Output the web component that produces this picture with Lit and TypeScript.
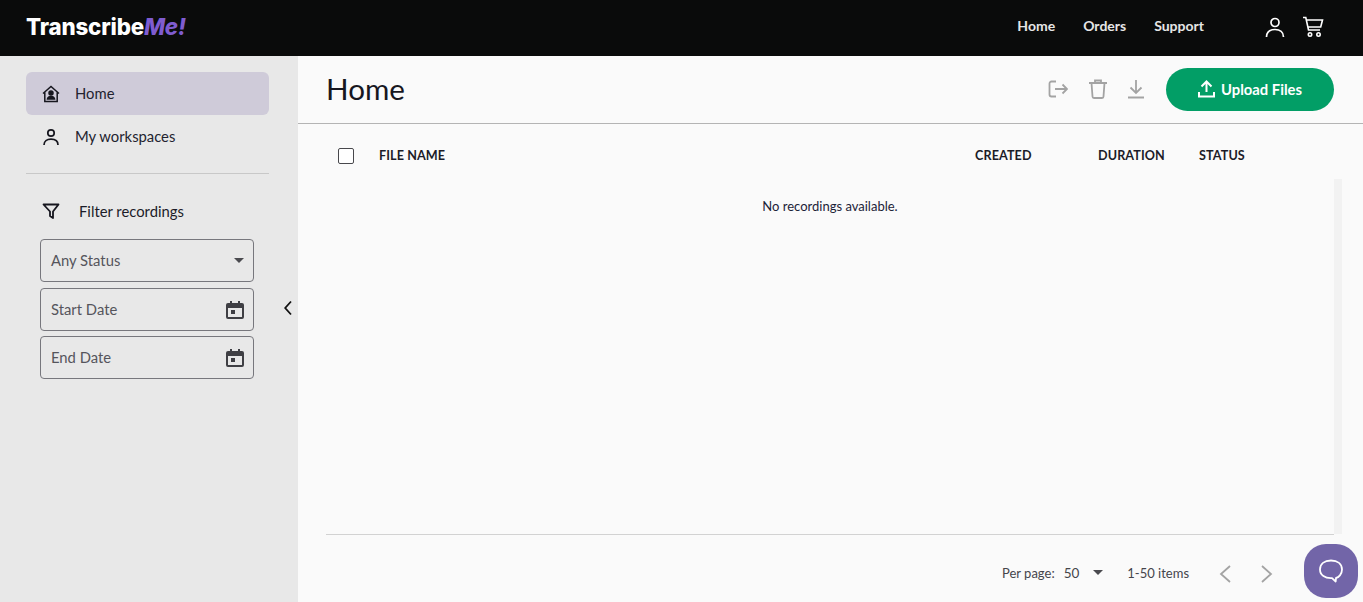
import { LitElement, html, css } from "lit";
import { customElement } from "lit/decorators.js";

@customElement("app-root")
export class AppRoot extends LitElement {
  static styles = css`
    :host { display: block; width: 100%; height: 602px; overflow: hidden; position: relative; font-family: "Lato", "Noto Sans", sans-serif; color: #1c1c28; }
    * { box-sizing: border-box; }
    svg { display: block; flex: none; }
    .top { height: 56px; background: #0a0b0b; display: flex; align-items: center; padding: 0 39px 0 26px; }
    .logo { font-family: "Inter", sans-serif; font-weight: 800; font-size: 22.3px; color: #fff; letter-spacing: -0.15px; flex: 1; margin-top: -3px; }
    .logo i { color: #7f5cd0; font-weight: 800; }
    .nav { display: flex; gap: 28px; font-size: 14px; font-weight: 700; color: #e6e6e6; margin: -5px 60px 0 0; }
    .top-icons { display: flex; gap: 16px; align-items: center; color: #fff; margin-top: -2px; }
    .body { display: flex; height: 546px; }
    .side { width: 298px; flex: none; background: #e8e8e8; padding: 16px 29px 0 26px; position: relative; }
    .item { height: 43px; display: flex; align-items: center; gap: 15px; padding-left: 16px; border-radius: 6px; font-size: 14.8px; color: #23232f; }
    .item span, .field span:first-child { margin-top: -2px; }
    .item.on { background: #cfcbd9; }
    .rule { height: 1px; background: #c8c8c8; margin-top: 15px; }
    .filter { display: flex; align-items: center; gap: 19px; padding: 24px 0 0 16px; height: 49px; font-size: 14.8px; }
    .fields { display: flex; flex-direction: column; gap: 5px; margin: 16px 15px 0 14px; }
    .field { height: 43px; border: 1px solid #77777d; border-radius: 4px; display: flex; align-items: center; justify-content: space-between; padding: 0 9px 0 10px; font-size: 14.8px; color: #55555c; }
    .field:first-child { margin-bottom: 1px; }
    .caret { width: 0; height: 0; border-left: 5px solid transparent; border-right: 5px solid transparent; border-top: 5px solid #4a4a4f; }
    .collapse { position: absolute; left: 284px; top: 244px; }
    .main { flex: 1; background: #fafafa; display: flex; flex-direction: column; min-width: 0; }
    .head { height: 68px; border-bottom: 1px solid #b4b4b4; display: flex; align-items: center; padding: 0 29px 0 28px; }
    h1 { margin: -2px 0 0; font-size: 29.6px; font-weight: 400; flex: 1; color: #17171f; }
    .actions { display: flex; align-items: center; gap: 21px; color: #a3a3a3; margin: -2px 22px 0 0; }
    .upload { width: 168px; height: 43px; border-radius: 22px; background: #029e66; color: #fff; display: flex; align-items: center; justify-content: center; gap: 6px; font-size: 14.8px; font-weight: 700; padding-bottom: 1px; }
    .table { flex: 1; display: flex; flex-direction: column; margin: 0 21px 0 28px; min-height: 0; }
    .thead { height: 55px; padding: 8px 0 0 12px; display: grid; grid-template-columns: 41px 1fr 123px 101px 143px; align-items: center; font-size: 12.6px; letter-spacing: 0.1px; font-weight: 700; color: #1c1c28; flex: none; }
    .check { width: 16px; height: 16px; border: 1.5px solid #48484c; border-radius: 2px; background: #fff; }
    .tbody { flex: 1; display: flex; border-bottom: 1px solid #d2d2d2; margin-right: 8px; position: relative; }
    .scroll { position: absolute; right: -8px; top: 0; bottom: 0; width: 8px; background: #f2f2f2; }
    .empty { flex: 1; text-align: center; padding-top: 19px; font-size: 13px; color: #1c2338; }
    .foot { height: 67px; padding: 8px 0 0 676px; display: flex; align-items: center; font-size: 13px; color: #45454b; flex: none; }
    .per { margin-right: 9px; font-size: 13px; }
    .num { margin-right: 14px; font-size: 13.5px; }
    .count { margin: 0 30px 0 24px; }
    .pager { display: flex; gap: 30px; color: #a3a3a3; margin-top: 2px; }
    .chat { position: absolute; left: 1304px; top: 544px; width: 54px; height: 54px; border-radius: 22px; background: #7265a8; display: flex; align-items: center; justify-content: center; }
  `;

  render() {
    return html`
      <div class="top">
        <div class="logo">Transcribe<i>Me!</i></div>
        <div class="nav"><span>Home</span><span>Orders</span><span>Support</span></div>
        <div class="top-icons">
          <svg width="22" height="22" viewBox="0 0 22 22" fill="none" stroke="currentColor" stroke-width="1.7"><circle cx="11" cy="6.5" r="4"/><path d="M2.5 21c0-5 3.6-7.5 8.5-7.500s8.500 2.500 8.500 7.500"/></svg>
          <svg width="22" height="22" viewBox="0 0 22 22" fill="none" stroke="currentColor" stroke-width="1.6"><path d="M1 1.500h2.800l2.700 12.500h11.500M4.500 4h16l-1.800 7H6"/><circle cx="8" cy="18.500" r="1.700"/><circle cx="16.500" cy="18.500" r="1.700"/></svg>
        </div>
      </div>
      <div class="body">
        <div class="side">
          <div class="item on">
            <svg width="18" height="18" viewBox="0 0 18 18" fill="none" stroke="#16161e" stroke-width="1.500"><path d="M1 8.500 9 1.500l8 7M2.800 7.500v9h12.400v-9"/><circle cx="9" cy="8" r="2" fill="#16161e"/><path d="M5.500 14c.4-2 1.800-2.600 3.500-2.600s3.100.6 3.500 2.600z" fill="#16161e"/></svg>
            <span>Home</span>
          </div>
          <div class="item">
            <svg width="18" height="18" viewBox="0 0 18 18" fill="none" stroke="#16161e" stroke-width="1.700"><circle cx="9" cy="5" r="3.200"/><path d="M2 17c0-4 3-5.800 7-5.800s7 1.800 7 5.800"/></svg>
            <span>My workspaces</span>
          </div>
          <div class="rule"></div>
          <div class="filter">
            <svg width="18" height="18" viewBox="0 0 18 18" fill="none" stroke="#16161e" stroke-width="1.800" stroke-linejoin="round"><path d="M1.500 2.500h15L11 9.500v6.500l-3-2v-4.500z"/></svg>
            <span>Filter recordings</span>
          </div>
          <div class="fields">
            <div class="field"><span>Any Status</span><span class="caret"></span></div>
            <div class="field"><span>Start Date</span>${this.cal()}</div>
            <div class="field"><span>End Date</span>${this.cal()}</div>
          </div>
          <svg class="collapse" width="8" height="16" viewBox="0 0 8 16" fill="none" stroke="#111" stroke-width="1.800"><path d="M7 1.500 1.200 8 7 14.500"/></svg>
        </div>
        <div class="main">
          <div class="head">
            <h1>Home</h1>
            <div class="actions">
              <svg width="20" height="20" viewBox="0 0 20 20" fill="none" stroke="currentColor" stroke-width="1.800"><path d="M8 2.500H3.500A2 2 0 0 0 1.500 4.500v11a2 2 0 0 0 2 2H8M7 10h12M14.500 5.500 19 10l-4.500 4.500"/></svg>
              <svg width="18" height="20" viewBox="0 0 18 20" fill="none" stroke="currentColor" stroke-width="1.800"><path d="M0 4h18M6 4V1.500h6V4M2.500 4l1 13.500a1.500 1.500 0 0 0 1.500 1.500h8a1.500 1.500 0 0 0 1.500-1.500l1-13.500"/></svg>
              <svg width="16" height="20" viewBox="0 0 16 20" fill="none" stroke="currentColor" stroke-width="1.800"><path d="M8 1v13M2.500 8.500 8 14l5.500-5.500M0 18.500h16"/></svg>
            </div>
            <div class="upload">
              <svg width="17" height="18" viewBox="0 0 17 18" fill="none" stroke="#fff" stroke-width="2"><path d="M8.500 12V2M3.500 6.500l5-5 5 5M1 12v4.500h15V12"/></svg>
              <span>Upload Files</span>
            </div>
          </div>
          <div class="table">
            <div class="thead">
              <span class="check"></span><span>FILE NAME</span><span>CREATED</span><span>DURATION</span><span>STATUS</span>
            </div>
            <div class="tbody">
              <div class="empty">No recordings available.</div>
              <div class="scroll"></div>
            </div>
            <div class="foot">
              <span class="per">Per page:</span><span class="num">50</span><span class="caret"></span>
              <span class="count">1-50 items</span>
              <div class="pager">
                <svg width="12" height="18" viewBox="0 0 12 18" fill="none" stroke="currentColor" stroke-width="1.800"><path d="M11 1 2 9l9 8"/></svg>
                <svg width="12" height="18" viewBox="0 0 12 18" fill="none" stroke="currentColor" stroke-width="1.800"><path d="m1 1 9 8-9 8"/></svg>
              </div>
            </div>
          </div>
        </div>
      </div>
      <div class="chat">
        <svg width="26" height="26" viewBox="0 0 26 26" fill="none" stroke="#fff" stroke-width="1.800" stroke-linejoin="round"><path d="M13 2.500c6.500 0 11 3.300 11 9 0 5-3.500 8-6 8.500l-.3 3.500-3.700-3.400c-7 .4-12-3-12-8.600 0-5.700 4.500-9 11-9z"/></svg>
      </div>
    `;
  }

  cal() {
    return html`<svg width="18" height="18" viewBox="0 0 18 18" fill="#3f3f44"><path fill-rule="evenodd" d="M4 0h2v2h6V0h2v2h2a2 2 0 0 1 2 2v12a2 2 0 0 1-2 2H2a2 2 0 0 1-2-2V4a2 2 0 0 1 2-2h2zM2 7v9h14V7z"/><rect x="5" y="9" width="4" height="4"/></svg>`;
  }
}
